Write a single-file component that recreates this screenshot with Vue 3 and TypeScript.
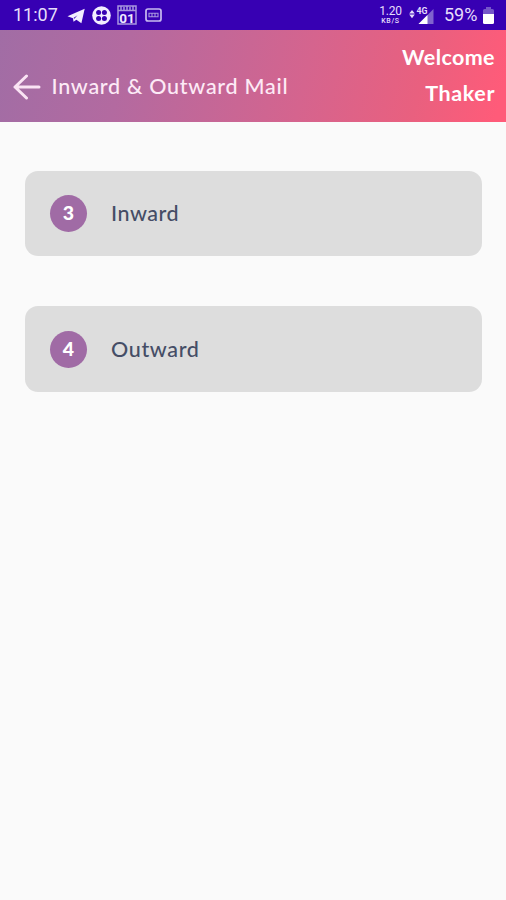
<script setup lang="ts">
interface MailItem {
  count: number
  label: string
  kind: string
}

const items: MailItem[] = [
  { count: 3, label: 'Inward', kind: 'inward' },
  { count: 4, label: 'Outward', kind: 'outward' },
]
</script>

<template>
  <div class="screen">
    <div class="status">
      <span class="clock">11:07</span>
      <svg class="plane" width="19" height="16" viewBox="0 0 19 16"><path d="M.5 8.2 17.7.7 14.4 15.2 9.4 11.7 6.5 13.8 6 10.2Z" fill="#f2edff" /><path d="M6.5 10 10.5 7.2 7.4 10.8Z" fill="#3700b3" /></svg>
      <svg class="clover" width="19" height="19" viewBox="0 0 19 19">
        <circle cx="9.5" cy="9.5" r="9.3" fill="#f2edff" />
        <g fill="#3700b3"><circle cx="6.6" cy="6.6" r="2.5" /><circle cx="12.4" cy="6.6" r="2.5" /><circle cx="6.6" cy="12.4" r="2.5" /><circle cx="12.4" cy="12.4" r="2.5" /></g>
      </svg>
      <svg class="calendar" width="20" height="20" viewBox="0 0 20 20">
        <path d="M1 1H19V19H1Z" fill="none" stroke="#a997df" stroke-width="1.5" />
        <path d="M1 5.5H19M4 1V5M7 2V5M10 1V5M13 2V5M16 1V5" stroke="#a997df" stroke-width="1.5" />
        <text x="10" y="18" text-anchor="middle" font-size="13.5" font-weight="700" fill="#eee8ff">01</text>
      </svg>
      <svg class="card-icon" width="17" height="14" viewBox="0 0 17 14"><rect x="1" y="1" width="15" height="12" rx="2" fill="none" stroke="#c8baf0" stroke-width="1.7" /><path d="M4 5.2H13V8.8H4ZM7 5V9M10 5V9" fill="none" stroke="#a997df" stroke-width="1.1" /></svg>
      <span class="spacer"></span>
      <span class="speed"><span class="rate">1.20</span><span class="unit">KB/S</span></span>
      <svg class="signal" width="26" height="20" viewBox="0 0 26 20">
        <path d="M3 4 5.8 7.6H.2ZM3 12.2 5.8 8.6H.2Z" fill="#e4dcfb" />
        <path d="M24.5 3V18H9.5Z" fill="#8063ce" /><path d="M18.5 9V18H9.5Z" fill="#fff" />
        <text x="7.5" y="8" font-size="8.5" font-weight="700" fill="#e4dcfb" textLength="11" lengthAdjust="spacingAndGlyphs">4G</text>
      </svg>
      <span class="percent">59%</span>
      <svg class="battery" width="11" height="17" viewBox="0 0 11 17"><path d="M3 0H8V2H9.5Q11 2 11 3.5V7H0V3.5Q0 2 1.5 2H3Z" fill="#7556c9" /><path d="M0 7H11V15.5Q11 17 9.5 17H1.5Q0 17 0 15.5Z" fill="#fff" /></svg>
    </div>

    <header class="header">
      <svg class="back" width="28" height="26" viewBox="0 0 28 26"><path d="M26 13H2M13.5 2 2 13 13.5 24" fill="none" stroke="#fae3f4" stroke-width="3" stroke-linecap="round" stroke-linejoin="round" /></svg>
      <h1 class="title">Inward &amp; Outward Mail</h1>
      <div class="greeting"><span class="welcome">Welcome</span><span class="user">Thaker</span></div>
    </header>

    <main class="list">
      <div v-for="item in items" :key="item.kind" class="card">
        <span class="badge">{{ item.count }}</span>
        <span class="label" :class="item.kind">{{ item.label }}</span>
      </div>
    </main>
  </div>
</template>

<style>
body { background: #fafafa; }
</style>

<style scoped>
.screen { width: 506px; height: 900px; overflow: hidden; background: #fafafa; font-family: Lato, "Noto Sans", sans-serif; }
.status { height: 30px; box-sizing: border-box; padding: 0 12px 0 13px; display: flex; align-items: center; background: #3700b3; color: #e6defb; font-family: Roboto, sans-serif; }
.clock { width: 54px; font-size: 18px; line-height: 30px; white-space: nowrap; }
.plane { margin-top: 1px; }
.clover { margin-left: 6px; }
.calendar { margin-left: 6px; }
.card-icon { margin-left: 8px; }
.spacer { flex: 1; }
.speed { display: flex; flex-direction: column; align-items: center; width: 23px; margin-right: 7px; }
.rate { font-size: 12px; line-height: 14px; letter-spacing: -0.2px; }
.unit { margin-top: -1px; font-size: 7px; line-height: 9px; font-weight: 500; letter-spacing: 0.7px; }
.speed, .signal, .percent, .battery { flex: none; }
.percent { width: 39px; margin-left: 9px; font-size: 18px; line-height: 30px; white-space: nowrap; }
.signal { margin-top: 2px; }
.battery { margin-top: 1px; }
.header { height: 91.5px; box-sizing: border-box; padding: 0 11px 0 13px; display: flex; align-items: flex-start; background: linear-gradient(103deg, #a16da5 0%, #b36aa0 25%, #d5648e 60%, #e9607f 82%, #ff5b79 98%); color: #fff; }
.back { margin-top: 44px; flex: none; }
.title { margin: 42px 0 0 10.5px; font-size: 21.5px; line-height: 28px; font-weight: 500; color: #fdeaf6; letter-spacing: 0.72px; white-space: nowrap; }
.greeting { margin-left: auto; display: flex; flex-direction: column; align-items: flex-end; padding-top: 9px; font-size: 21.5px; line-height: 36px; font-weight: 700; }
.welcome { letter-spacing: 0.4px; }
.user { letter-spacing: 0.6px; }
.list { padding: 49.5px 24px 0 25px; display: flex; flex-direction: column; gap: 50px; }
.card { height: 85.4px; box-sizing: border-box; padding-left: 25px; display: flex; align-items: center; background: #ddd; border-radius: 13px; }
.badge { width: 37px; height: 37px; border-radius: 50%; background: #a06ba5; color: #fff; font-size: 19.5px; line-height: 36px; font-weight: 900; text-align: center; }
.label { margin: -1px 0 0 24px; font-size: 21.5px; line-height: 30px; font-weight: 500; color: #454d66; letter-spacing: 0.5px; }
.outward { margin-top: 0; letter-spacing: 0.65px; }
</style>
